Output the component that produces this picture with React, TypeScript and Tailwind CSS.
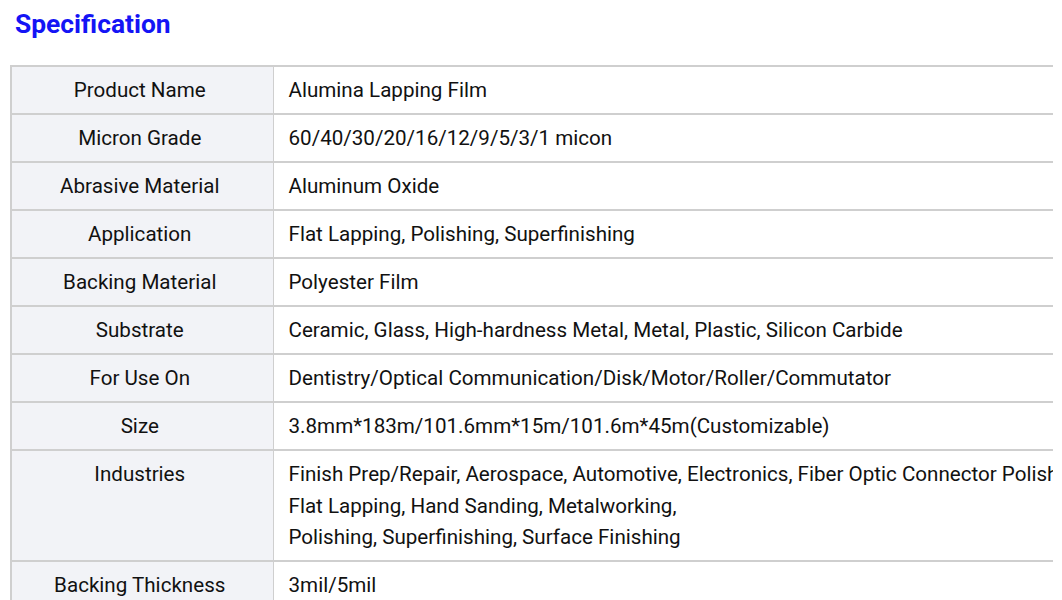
const rows: { label: string; value: string[] }[] = [
  { label: "Product Name", value: ["Alumina Lapping Film"] },
  { label: "Micron Grade", value: ["60/40/30/20/16/12/9/5/3/1 micon"] },
  { label: "Abrasive Material", value: ["Aluminum Oxide"] },
  { label: "Application", value: ["Flat Lapping, Polishing, Superfinishing"] },
  { label: "Backing Material", value: ["Polyester Film"] },
  {
    label: "Substrate",
    value: ["Ceramic, Glass, High-hardness Metal, Metal, Plastic, Silicon Carbide"],
  },
  {
    label: "For Use On",
    value: ["Dentistry/Optical Communication/Disk/Motor/Roller/Commutator"],
  },
  { label: "Size", value: ["3.8mm*183m/101.6mm*15m/101.6m*45m(Customizable)"] },
  {
    label: "Industries",
    value: [
      "Finish Prep/Repair, Aerospace, Automotive, Electronics, Fiber Optic Connector Polishing,",
      "Flat Lapping, Hand Sanding, Metalworking,",
      "Polishing, Superfinishing, Surface Finishing",
    ],
  },
  { label: "Backing Thickness", value: ["3mil/5mil"] },
  { label: "Shape", value: ["Sheet/Disc/Roll"] },
];

function App() {
  return (
    <div className="h-[600px] overflow-hidden bg-white font-['Roboto',sans-serif] text-[#111]">
      <h2 className="pl-[15px] pt-[8px] text-[26.4px] font-bold leading-[32px] text-[#1414f5]">
        Specification
      </h2>
      <div className="ml-[10px] mt-[25px] w-[1043px] overflow-hidden">
        <table className="w-[1400px] border-collapse text-[20.6px] leading-[31.6px]">
          <tbody>
            {rows.map((row) => (
              <tr key={row.label} className="border-y-2 border-[#cfcfcf]">
                <td className="w-[262px] border-l-2 border-r border-[#cfcfcf] bg-[#f2f3f7] pt-[8.4px] pb-[6px] pr-[5px] text-center align-top">
                  {row.label}
                </td>
                <td className="whitespace-nowrap pt-[8.4px] pb-[6px] pl-[15px] align-top">
                  {row.value.map((line, i) => (
                    <div key={i}>{line}</div>
                  ))}
                </td>
              </tr>
            ))}
          </tbody>
        </table>
      </div>
    </div>
  );
}

export default App;
